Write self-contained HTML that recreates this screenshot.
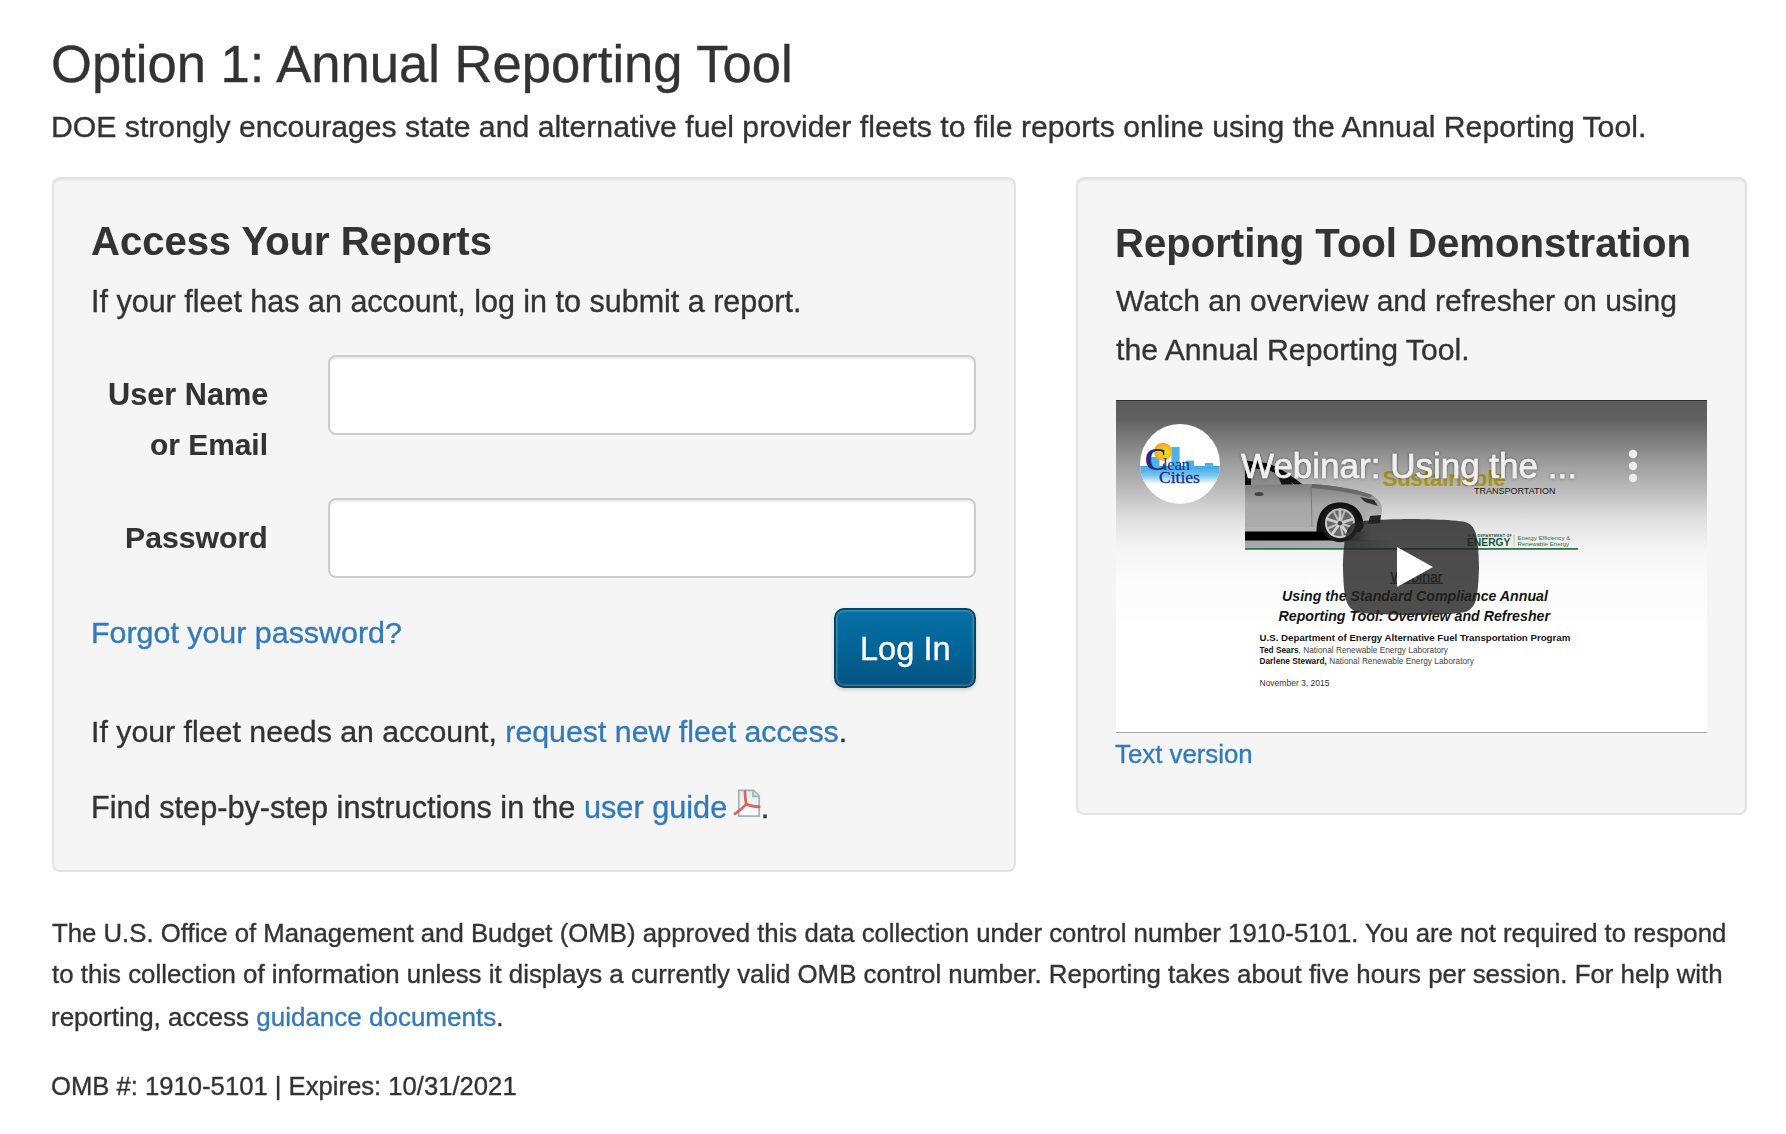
<!DOCTYPE html>
<html>
<head>
<meta charset="utf-8">
<style>
html,body{margin:0;padding:0;background:#fff;}
body{width:1786px;height:1134px;position:relative;overflow:hidden;font-family:"Liberation Sans",sans-serif;color:#333;}
.t{position:absolute;white-space:nowrap;will-change:transform;-webkit-text-stroke:0.35px currentColor;}
.b{-webkit-text-stroke:0.1px currentColor;}
a{color:#337ab7;text-decoration:none;}
.well{position:absolute;background:#f5f5f5;border:2px solid #e3e3e3;border-radius:8px;box-shadow:inset 0 2px 2px rgba(0,0,0,.05);box-sizing:border-box;}
.inp{position:absolute;background:#fff;border:2px solid #ccc;border-radius:8px;box-sizing:border-box;box-shadow:inset 0 2px 2px rgba(0,0,0,.075);}
.btn{position:absolute;box-sizing:border-box;border:2px solid #084560;border-radius:10px;background:linear-gradient(#0670a5,#02669a 45%,#03547e);box-shadow:inset 0 0 1px 1.5px rgba(255,255,255,.22),0 2px 4px rgba(0,0,0,.15);color:#fff;}
.b{font-weight:bold;}
#video{position:absolute;left:1116px;top:400px;width:591px;height:332px;background:#fff;overflow:hidden;}
#video .t{color:#111;}
</style>
</head>
<body>
<div class="t" style="left:51px;top:38px;font-size:52.6px;line-height:52.6px;">Option 1: Annual Reporting Tool</div>
<div class="t" style="left:51px;top:112px;font-size:30.2px;line-height:30.2px;">DOE strongly encourages state and alternative fuel provider fleets to file reports online using the Annual Reporting Tool.</div>

<div class="well" style="left:52px;top:177px;width:964px;height:695px;"></div>
<div class="well" style="left:1076px;top:177px;width:671px;height:638px;"></div>

<!-- left well -->
<div class="t b" style="left:90.6px;top:221px;font-size:40px;line-height:40px;">Access Your Reports</div>
<div class="t" style="left:90.8px;top:286px;font-size:30.5px;line-height:30.5px;">If your fleet has an account, log in to submit a report.</div>

<div class="t b" style="right:1518px;top:380px;font-size:30.7px;line-height:30.7px;text-align:right;">User Name</div>
<div class="t b" style="right:1518px;top:429.5px;font-size:29.9px;line-height:29.9px;text-align:right;">or Email</div>
<div class="inp" style="left:328px;top:355px;width:648px;height:80px;"></div>

<div class="t b" style="right:1518px;top:523px;font-size:30.2px;line-height:30.2px;text-align:right;">Password</div>
<div class="inp" style="left:328px;top:498px;width:648px;height:80px;"></div>

<div class="t" style="left:91.3px;top:617px;font-size:30.4px;line-height:30.4px;"><a>Forgot your password?</a></div>
<div class="btn" style="left:834px;top:608px;width:142px;height:80px;"></div>
<div class="t" style="left:860px;top:632.5px;font-size:32.6px;line-height:32.6px;color:#fff;">Log In</div>

<div class="t" style="left:90.8px;top:717px;font-size:30.3px;line-height:30.3px;">If your fleet needs an account, <a>request new fleet access</a>.</div>
<div class="t" style="left:91px;top:792.5px;font-size:30.7px;line-height:30.7px;">Find step-by-step instructions in the <a>user guide</a> <span style="display:inline-block;width:25px;"></span>.</div>
<svg class="t" style="left:734px;top:789px;" width="28" height="29" viewBox="0 0 28 29">
  <defs><linearGradient id="pdfg" x1="0" y1="0" x2="0" y2="1"><stop offset="0" stop-color="#ddeef1"/><stop offset="1" stop-color="#fbfdfd"/></linearGradient></defs>
  <path d="M4.8 1.3 H19.6 L25.2 6.9 V27.1 H4.8 Z" fill="url(#pdfg)" stroke="#a2b2b4" stroke-width="1.7"/>
  <path d="M18.9 1.3 V7.6 H25.2" fill="#cfdcdd" stroke="#a2b2b4" stroke-width="1.5"/>
  <path d="M11 2.5 C11 8 11.5 12 12.2 15 C9 19 5 22 1 24.8 M12.2 15 C16 17 20 17.6 25.3 17.8" stroke="#e04a4a" stroke-width="2.7" stroke-linecap="round" fill="none" opacity="0.88"/>
</svg>

<!-- right well -->
<div class="t b" style="left:1115px;top:223px;font-size:40.1px;line-height:40.1px;">Reporting Tool Demonstration</div>
<div class="t" style="left:1116px;top:286px;font-size:30px;line-height:30px;">Watch an overview and refresher on using</div>
<div class="t" style="left:1116px;top:335px;font-size:30.2px;line-height:30.2px;">the Annual Reporting Tool.</div>

<div id="video"><svg width="591" height="333" viewBox="0 0 591 333" style="position:absolute;left:0;top:0;font-family:'Liberation Sans',sans-serif;">
<defs>
  <linearGradient id="topgrad" x1="0" y1="0" x2="0" y2="1">
    <stop offset="0" stop-color="#000" stop-opacity="0.65"/>
    <stop offset="0.091" stop-color="#000" stop-opacity="0.615"/>
    <stop offset="0.182" stop-color="#000" stop-opacity="0.51"/>
    <stop offset="0.273" stop-color="#000" stop-opacity="0.40"/>
    <stop offset="0.364" stop-color="#000" stop-opacity="0.31"/>
    <stop offset="0.455" stop-color="#000" stop-opacity="0.215"/>
    <stop offset="0.545" stop-color="#000" stop-opacity="0.12"/>
    <stop offset="0.682" stop-color="#000" stop-opacity="0.04"/>
    <stop offset="0.818" stop-color="#000" stop-opacity="0.014"/>
    <stop offset="1" stop-color="#000" stop-opacity="0.008"/>
  </linearGradient>
  <linearGradient id="bodyg" x1="0" y1="0" x2="0" y2="1">
    <stop offset="0" stop-color="#b4b4b4"/>
    <stop offset="0.45" stop-color="#cdcdcd"/>
    <stop offset="1" stop-color="#bcbcbc"/>
  </linearGradient>
  <linearGradient id="shadowg" x1="0" y1="0" x2="1" y2="0">
    <stop offset="0" stop-color="#000"/>
    <stop offset="0.75" stop-color="#000"/>
    <stop offset="1" stop-color="#000" stop-opacity="0"/>
  </linearGradient>
  <linearGradient id="floorg" x1="0" y1="0" x2="0" y2="1">
    <stop offset="0" stop-color="#9a9a9a"/>
    <stop offset="1" stop-color="#e8e8e8"/>
  </linearGradient>
  <linearGradient id="floorg2" x1="0" y1="0" x2="1" y2="0">
    <stop offset="0" stop-color="#b0b0b0"/>
    <stop offset="0.7" stop-color="#b8b8b8"/>
    <stop offset="1" stop-color="#b8b8b8" stop-opacity="0"/>
  </linearGradient>
  <linearGradient id="bandg" x1="0" y1="0" x2="0" y2="1">
    <stop offset="0" stop-color="#3aa6e4"/>
    <stop offset="0.55" stop-color="#7cc6ef"/>
    <stop offset="1" stop-color="#ffffff"/>
  </linearGradient>
  <radialGradient id="sung" cx="0.6" cy="0.55" r="0.6">
    <stop offset="0" stop-color="#ffe21a"/>
    <stop offset="1" stop-color="#f2a118"/>
  </radialGradient>
  <clipPath id="logoclip"><circle cx="64" cy="64" r="40"/></clipPath>
  <filter id="tshadow" x="-5%" y="-20%" width="110%" height="140%"><feGaussianBlur in="SourceAlpha" stdDeviation="1.5"/><feComponentTransfer><feFuncA type="linear" slope="0.5"/></feComponentTransfer><feMerge><feMergeNode/><feMergeNode in="SourceGraphic"/></feMerge></filter>
</defs>
<rect width="591" height="333" fill="#fff"/>
<!-- slide header: car -->
<g>
  <rect x="129" y="140" width="150" height="8.5" fill="url(#floorg2)"/>
  <rect x="129" y="131" width="125" height="9.5" fill="url(#shadowg)"/>
  <!-- roof / window -->
  <path d="M129 60.5 L150 63 C160 66 172 73 188 85.5 L179 85.5 C168 77 158 71 148 69.5 L135 68.5 L135 85.5 L129 85.5 Z" fill="#111"/>
  <path d="M135 68.5 L148 69.5 C158 71 168 77 179 85.5 L135 85.5 Z" fill="#c6c6c6"/>
  <path d="M162 76.5 L169 76.5 L178 85.5 L166 85.5 Z" fill="#1c1c1c"/>
  <!-- body -->
  <path d="M129 85 L196 84 C222 86 244 90 256 95 C262 99 266 103 266 109 L265 116 C262 118 258 120 255 121 L246 127 L129 130 Z" fill="url(#bodyg)"/>
  <path d="M196 84 C222 86 244 90 256 95 L254 98 C238 93 220 90 196 88 Z" fill="#8e8e8e"/>
  <path d="M244 97 L258 100 L262 106 L249 102 Z" fill="#3a3a3a"/>
  <path d="M252 110 C258 108 264 108 266 110 L265 117 C260 119 255 121 250 121 Z" fill="#cfcfcf"/>
  <path d="M254 116 L265 115 L264 123 L252 124 Z" fill="#2a2a2a"/>
  <line x1="195" y1="86" x2="196" y2="128" stroke="#8a8a8a" stroke-width="0.8"/>
  <ellipse cx="143" cy="94" rx="4.5" ry="2" fill="#5a5a5a"/>
  <rect x="129" y="127" width="74" height="4.5" fill="#c4c4c4"/>
  <!-- wheel -->
  <path d="M200.5 132 C200.5 111 210 102.5 224 102.5 C238 102.5 247.5 111 247.5 127 L244 132 Z" fill="#141414"/>
  <circle cx="224" cy="123.2" r="19" fill="#1c1c1c"/>
  <circle cx="224" cy="123.2" r="15" fill="#e2e2e2"/>
  <circle cx="224" cy="123.2" r="13" fill="#767676"/>
  <g stroke="#e8e8e8" stroke-width="2.8" stroke-linecap="round">
    <line x1="224" y1="123.2" x2="224" y2="109.5"/><line x1="224" y1="123.2" x2="237" y2="119"/>
    <line x1="224" y1="123.2" x2="232" y2="134.3"/><line x1="224" y1="123.2" x2="216" y2="134.3"/>
    <line x1="224" y1="123.2" x2="211" y2="119"/>
  </g>
  <g stroke="#dadada" stroke-width="2">
    <line x1="224" y1="123.2" x2="229" y2="110.5"/><line x1="224" y1="123.2" x2="236.5" y2="127.3"/>
    <line x1="224" y1="123.2" x2="227" y2="136.5"/><line x1="224" y1="123.2" x2="211.5" y2="128.5"/>
    <line x1="224" y1="123.2" x2="217" y2="110.5"/>
  </g>
  <circle cx="224" cy="123.2" r="2.2" fill="#444"/>
  <!-- green line -->
  <rect x="129" y="148" width="333" height="1.8" fill="#2f7d4c"/>
  <!-- Sustainable transportation -->
  <text x="266.5" y="86.4" font-size="22.3" font-weight="bold" fill="#ecd12a" letter-spacing="-0.2">Sustainable</text>
  <text x="358" y="93.8" font-size="9" fill="#222">TRANSPORTATION</text>
  <!-- DOE logo -->
  <text x="352" y="137.2" font-size="3.6" font-weight="bold" fill="#28523a" letter-spacing="0.3">U.S. DEPARTMENT OF</text>
  <text x="351" y="146.3" font-size="10.3" font-weight="bold" fill="#175a36">ENERGY</text>
  <rect x="397.6" y="135" width="0.9" height="12" fill="#d6cf8f"/>
  <text x="401.5" y="139.6" font-size="6.1" fill="#1f7a45">Energy Efficiency &amp;</text>
  <text x="401.5" y="146.3" font-size="6.1" fill="#1f7a45">Renewable Energy</text>
</g>
<!-- slide text -->
<g fill="#141414">
  <text x="274.5" y="181.8" font-size="14" fill="#222" stroke="#222" stroke-width="0.25">Webinar</text>
  <rect x="274" y="182.6" width="53" height="1.2" fill="#333"/>
  <text x="166" y="200.9" font-size="14.2" font-weight="bold" font-style="italic">Using the Standard Compliance Annual</text>
  <text x="162.5" y="220.5" font-size="14.2" font-weight="bold" font-style="italic">Reporting Tool: Overview and Refresher</text>
  <text x="143.5" y="241.2" font-size="9.7" font-weight="bold">U.S. Department of Energy Alternative Fuel Transportation Program</text>
  <text x="143.5" y="252.7" font-size="8.3" fill="#444"><tspan font-weight="bold" fill="#141414">Ted Sears</tspan>, National Renewable Energy Laboratory</text>
  <text x="143.5" y="263.8" font-size="8.3" fill="#444"><tspan font-weight="bold" fill="#141414">Darlene Steward,</tspan> National Renewable Energy Laboratory</text>
  <text x="143.5" y="285.6" font-size="8.5" fill="#333">November 3, 2015</text>
</g>
<!-- top gradient -->
<rect x="0" y="0" width="591" height="220" fill="url(#topgrad)"/>
<rect x="0" y="0" width="591" height="1" fill="#000" opacity="0.45"/>
<!-- channel logo -->
<circle cx="64" cy="64" r="40" fill="#fff"/>
<g clip-path="url(#logoclip)">
  <rect x="20" y="66" width="90" height="18" fill="url(#bandg)"/>
  <rect x="35" y="57" width="8.5" height="10" fill="#4db2e8"/>
  <rect x="55.4" y="46.9" width="8.2" height="20" fill="#4db2e8"/>
  <rect x="69.7" y="60.6" width="8.3" height="7" fill="#4db2e8"/>
  <rect x="88.8" y="63" width="8.2" height="4" fill="#4db2e8"/>
  <circle cx="47" cy="51.7" r="9" fill="url(#sung)"/>
  <text x="28.5" y="70" font-family="Liberation Serif" font-size="31" font-weight="bold" fill="#1b2d8a">C</text>
  <text x="47" y="69.8" font-family="Liberation Serif" font-size="17" fill="#1b2d8a" letter-spacing="-0.4">lean</text>
  <text x="43" y="82.5" font-family="Liberation Serif" font-size="17.5" fill="#1b2d8a" stroke="#1b2d8a" stroke-width="0.3">Cities</text>
</g>
<!-- title -->
<text x="125" y="77.7" font-size="35" fill="#f0f0f0" stroke="#f0f0f0" stroke-width="0.6" filter="url(#tshadow)">Webinar: Using the ...</text>
<!-- kebab -->
<g fill="#eeeeee"><circle cx="517" cy="54" r="4.2"/><circle cx="517" cy="66" r="4.2"/><circle cx="517" cy="78" r="4.2"/></g>
<!-- play button -->
<g transform="translate(227,119) scale(2)">
  <path d="M66.52,7.74c-0.78-2.93-2.49-5.41-5.42-6.19C55.79,.13,34,0,34,0S12.21,.13,6.9,1.55C3.97,2.33,2.27,4.81,1.48,7.74C0.06,13.05,0,24,0,24s0.06,10.95,1.48,16.26c0.78,2.93,2.49,5.41,5.42,6.19C12.21,47.87,34,48,34,48s21.79-0.13,27.1-1.55c2.93-0.78,4.64-3.26,5.42-6.19C67.94,34.95,68,24,68,24S67.94,13.05,66.52,7.74z" fill="#212121" fill-opacity="0.8"/>
  <path d="M45,24 27,14 27,34" fill="#fff"/>
</g>
</svg></div>
<div style="position:absolute;left:1116px;top:732px;width:591px;height:1px;background:#a6a6a6;"></div>
<div class="t" style="left:1114.9px;top:742px;font-size:25.8px;line-height:25.8px;"><a>Text version</a></div>

<!-- footer -->
<div class="t" style="left:51.8px;top:921px;font-size:25.76px;line-height:25.76px;">The U.S. Office of Management and Budget (OMB) approved this data collection under control number 1910-5101. You are not required to respond</div>
<div class="t" style="left:52px;top:962px;font-size:25.85px;line-height:25.85px;">to this collection of information unless it displays a currently valid OMB control number. Reporting takes about five hours per session. For help with</div>
<div class="t" style="left:51px;top:1004px;font-size:26px;line-height:26px;">reporting, access <a>guidance documents</a>.</div>
<div class="t" style="left:51px;top:1073.5px;font-size:25.65px;line-height:25.65px;">OMB #: 1910-5101 | Expires: 10/31/2021</div>
</body>
</html>
